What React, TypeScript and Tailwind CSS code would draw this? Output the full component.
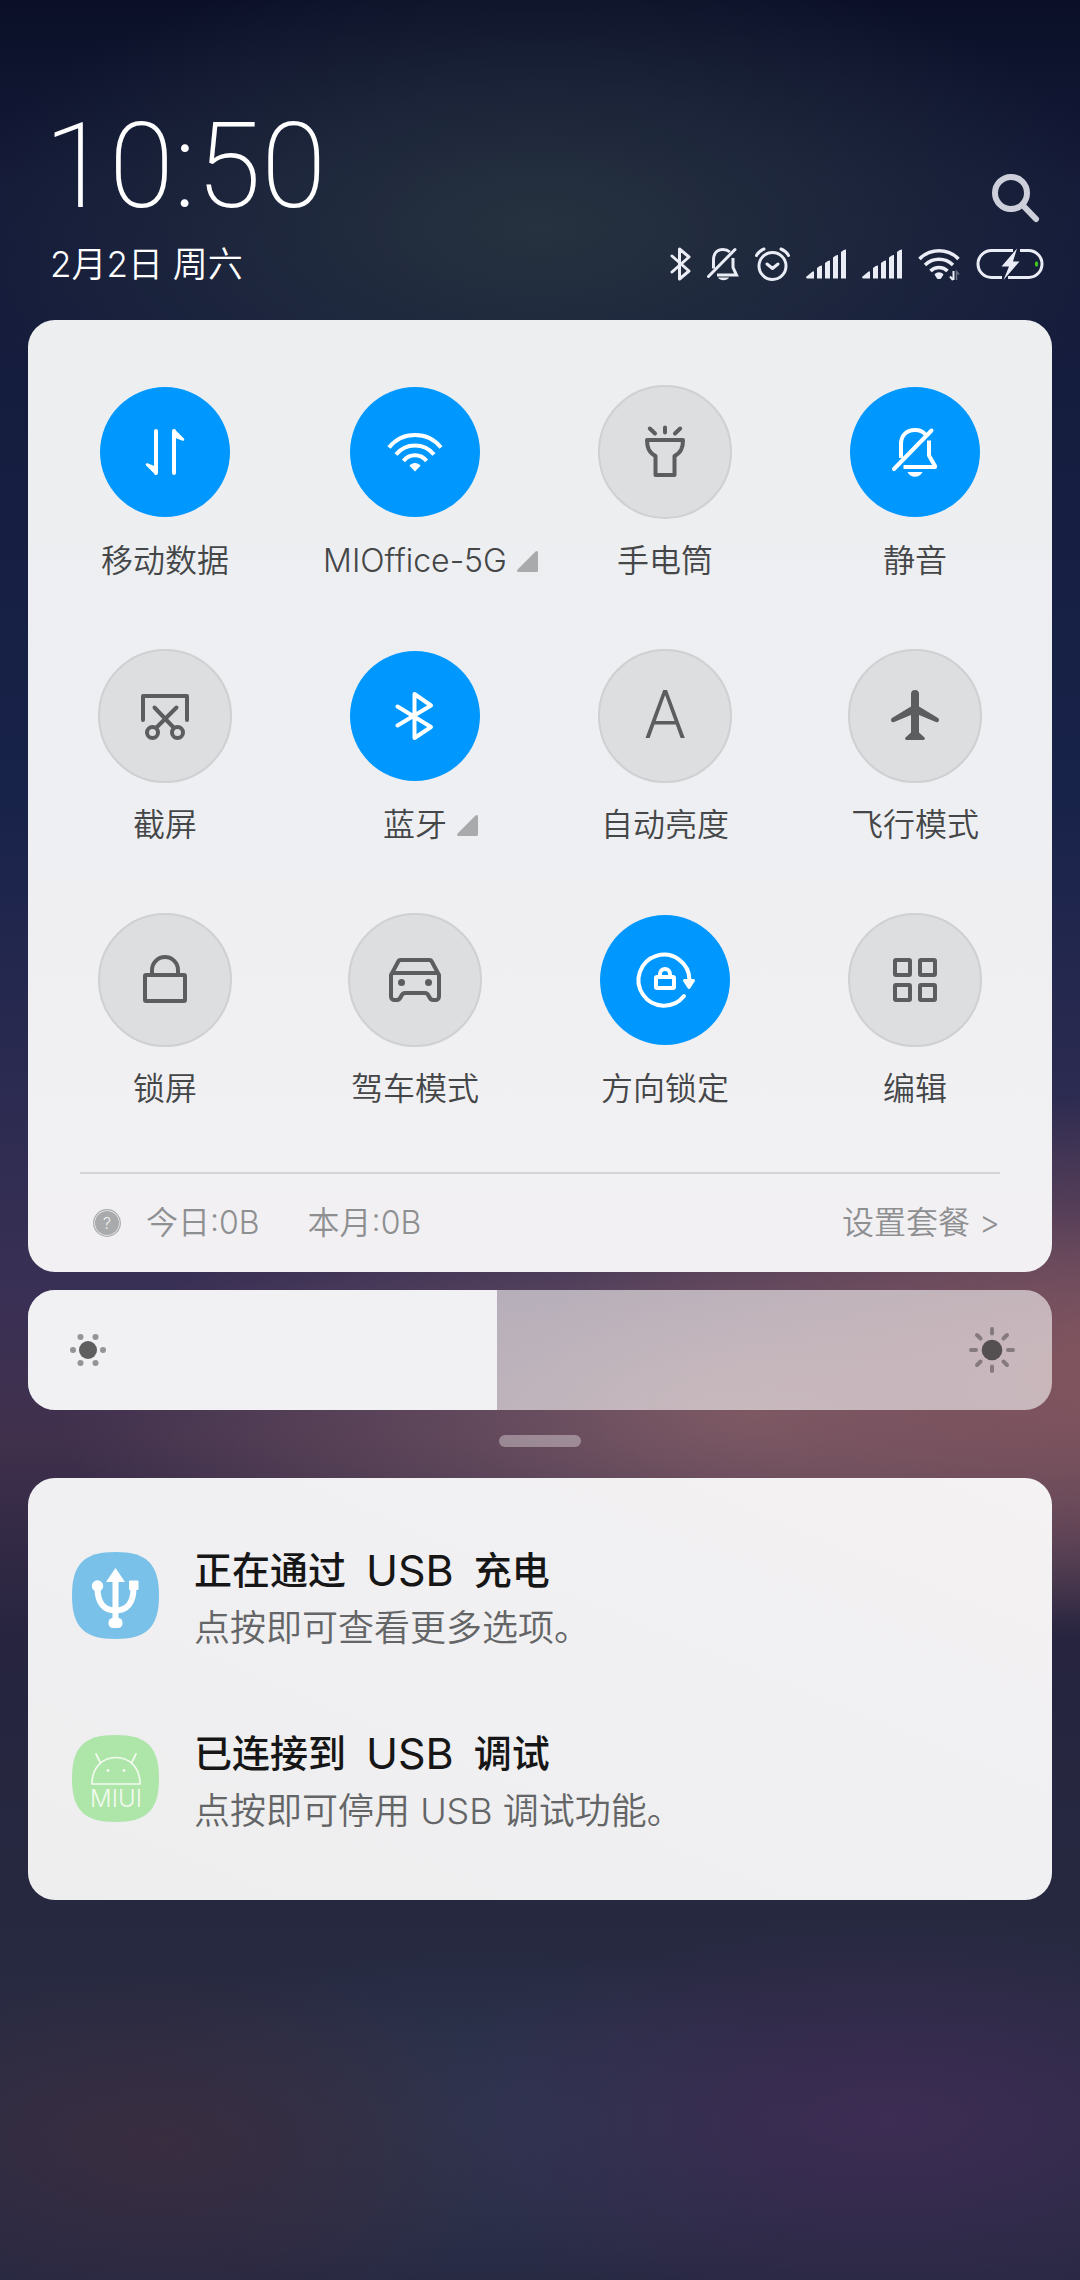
import { useState, type ReactNode } from "react";
import clsx from "clsx";

type Tile = {
  id: string;
  label: string;
  icon: ReactNode;
  expandable?: boolean;
};

const TILES: Tile[] = [
  { id: "data", label: "移动数据", icon: <DataIcon /> },
  { id: "wifi", label: "MIOffice-5G", icon: <WifiIcon />, expandable: true },
  { id: "torch", label: "手电筒", icon: <TorchIcon /> },
  { id: "mute", label: "静音", icon: <MuteIcon /> },
  { id: "screenshot", label: "截屏", icon: <ScreenshotIcon /> },
  { id: "bluetooth", label: "蓝牙", icon: <BluetoothIcon />, expandable: true },
  { id: "brightness", label: "自动亮度", icon: <span className="font-[Roboto] text-[66px] font-light leading-none">A</span> },
  { id: "airplane", label: "飞行模式", icon: <AirplaneIcon /> },
  { id: "lock", label: "锁屏", icon: <LockIcon /> },
  { id: "car", label: "驾车模式", icon: <CarIcon /> },
  { id: "rotation", label: "方向锁定", icon: <RotationIcon /> },
  { id: "edit", label: "编辑", icon: <EditIcon /> },
];

function TileSvg({ children }: { children: ReactNode }) {
  return (
    <svg
      viewBox="0 0 60 60"
      className="size-[60px] overflow-visible"
      fill="none"
      stroke="currentColor"
      strokeWidth="4"
      strokeLinecap="round"
      strokeLinejoin="round"
      aria-hidden="true"
    >
      {children}
    </svg>
  );
}

function DataIcon() {
  return (
    <TileSvg>
      <path d="M21 9V51M39 51V9" />
      <path d="M12 42.5L19.5 45.5L21 51.5ZM48 17.5L40.5 14.5L39 8.5Z" strokeWidth="2.5" fill="currentColor" />
    </TileSvg>
  );
}

function WifiIcon() {
  return (
    <TileSvg>
      <g strokeLinecap="butt">
        <path d="M4 25.5A33.3 33.3 0 0 1 56 25.5M11 32.5A24.5 24.5 0 0 1 49 32.5M18.5 39A14.5 14.5 0 0 1 41.5 39" />
      </g>
      <path d="M24.5 43.8C27 40 33 40 35.5 43.8L30 49.5Z" fill="currentColor" stroke="none" />
    </TileSvg>
  );
}

function TorchIcon() {
  return (
    <TileSvg>
      <path d="M12 18H48C48 26 46 30.5 39.5 34V53H20.5V34C14 30.5 12 26 12 18Z" />
      <path d="M30 5.5V10.5M14.8 6.5L20 11.5M45.2 6.5L40 11.5" />
    </TileSvg>
  );
}

function MuteIcon() {
  return (
    <TileSvg>
      <path d="M16 36V22C16 13 22 8 30 8C34.5 8 38 9.5 40.5 12.5" strokeLinecap="butt" />
      <path d="M44 18.5V33.5L50 44V45H18.5" strokeLinecap="butt" />
      <path d="M46.5 8.5L9 47" />
      <path d="M22.5 50H37.5C35 56.3 25 56.3 22.5 50Z" fill="currentColor" stroke="none" />
    </TileSvg>
  );
}

function ScreenshotIcon() {
  return (
    <TileSvg>
      <path d="M8 34V10H52V34" />
      <path d="M19.5 21.5L38.5 41.5M41.5 21.5L21.5 41.5" />
      <circle cx="17.5" cy="46.5" r="5.5" />
      <circle cx="42.5" cy="46.5" r="5.5" />
    </TileSvg>
  );
}

function BluetoothIcon() {
  return (
    <TileSvg>
      <path d="M12.5 20.5L46 41L29.5 52V8L46 19.5L12.5 39.5" />
    </TileSvg>
  );
}

function AirplaneIcon() {
  return (
    <TileSvg>
      <path
        d="M26 8a4 4 0 0 1 8 0V20.5L53 32a2.3 2.3 0 0 1-1.5 4.2L34 29V46.5L39.5 51.5a1.5 1.5 0 0 1-1 2.5H21.5a1.5 1.5 0 0 1-1-2.5L26 46.5V29L8.5 36.2A2.3 2.3 0 0 1 7 32L26 20.5Z"
        fill="currentColor"
        stroke="none"
      />
    </TileSvg>
  );
}

function LockIcon() {
  return (
    <TileSvg>
      <rect x="10" y="25" width="40" height="26" rx="1" />
      <path d="M17 25V20a13 13 0 0 1 26 0V25" />
    </TileSvg>
  );
}

function CarIcon() {
  return (
    <TileSvg>
      <path d="M6 25V46.5a3.5 3.5 0 0 0 3.5 3.5h2.5c2 0 3-1.5 4-3.5s1.5-3.5 4-3.5h20c2.5 0 3 1.5 4 3.5s2 3.5 4 3.5h2.5a3.5 3.5 0 0 0 3.5-3.5V25L47 12a3 3 0 0 0-3-2H16a3 3 0 0 0-3 2ZM8 23H52" />
      <circle cx="16.5" cy="32.5" r="3.5" fill="currentColor" stroke="none" />
      <circle cx="43.5" cy="32.5" r="3.5" fill="currentColor" stroke="none" />
    </TileSvg>
  );
}

function RotationIcon() {
  return (
    <TileSvg>
      <path d="M49 46A25.5 25.5 0 1 1 54.5 30" />
      <path d="M49.5 30.5H58.5L54 37.5Z" fill="currentColor" strokeWidth="3" />
      <rect x="21" y="27" width="18" height="11" rx="1" />
      <path d="M25 27V24a5 5 0 0 1 10 0V27" />
    </TileSvg>
  );
}

function EditIcon() {
  return (
    <TileSvg>
      <rect x="10" y="10" width="15" height="15" rx="1" />
      <rect x="35" y="10" width="15" height="15" rx="1" />
      <rect x="10" y="35" width="15" height="15" rx="1" />
      <rect x="35" y="35" width="15" height="15" rx="1" />
    </TileSvg>
  );
}

function SignalIcon() {
  return (
    <svg viewBox="0 0 40 30" className="h-[30px] w-10" fill="currentColor" aria-label="信号">
      <path d="M.5 27.5L6 23q2-1.5 2 .5v6H1q-1.5-.5-.5-2z" />
      <path d="M11 19q3-3 5-2.500v13h-5zM19 14q3-3 5-2.500v18h-5zM27 8.500q3-3 5-2.500v23.500h-5zM35 3q3-3 5-2.500v29h-5z" />
    </svg>
  );
}

function StatusIcons() {
  return (
    <div className="flex h-12 items-center gap-4 text-[#eaedf6]">
      <svg viewBox="0 0 21 34" className="h-[34px] w-[21px]" fill="none" stroke="currentColor" strokeWidth="3" strokeLinejoin="round" strokeLinecap="round" aria-label="蓝牙">
        <path d="M2 9L19 24L9.5 32V2L19 10L2 25" />
      </svg>
      <svg viewBox="0 0 32 34" className="h-[34px] w-8" fill="none" stroke="currentColor" strokeWidth="3" aria-label="静音">
        <path d="M6.5 21.5V13C6.5 6 10.5 2.5 16 2.5C19 2.5 21 3.3 22.8 5M26 11V20.5L29.5 28H10" />
        <path d="M28 2.5L1.5 29.5" strokeLinecap="round" />
        <path d="M11 30.5H22C20 34 13 34 11 30.5Z" fill="currentColor" stroke="none" />
      </svg>
      <svg viewBox="0 0 35 34" className="h-[34px] w-[35px]" fill="none" stroke="currentColor" strokeWidth="3" strokeLinecap="round" strokeLinejoin="round" aria-label="闹钟">
        <circle cx="17.5" cy="19" r="13.5" />
        <path d="M12 17l5.5 4.5 5.5-4.5M1.5 8.5Q4 4 9 2M33.5 8.5Q31 4 26 2" />
      </svg>
      <SignalIcon />
      <SignalIcon />
      <svg viewBox="0 0 42 34" className="h-[34px] w-[42px]" fill="none" stroke="currentColor" strokeWidth="3.5" aria-label="WLAN">
        <path d="M1.5 12A27 27 0 0 1 40.5 12M7 18A20 20 0 0 1 35 18M12.5 24A12 12 0 0 1 29.5 24" />
        <path d="M16.5 27.5C19 24.5 23 24.5 25.5 27.5L23 31.5Q21 32.5 19 31.5Z" fill="currentColor" stroke="none" />
        <path d="M35.5 24V33M32 29.5L35 33" strokeWidth="2" />
        <path d="M38.5 33V24.5L41 27.5" strokeWidth="1.5" opacity=".4" />
      </svg>
      <svg viewBox="0 0 68 34" className="h-[34px] w-[68px]" fill="none" stroke="currentColor" strokeWidth="3" aria-label="正在充电">
        <path d="M37 3.5H15.5A13.5 13.5 0 0 0 15.5 30.5H26M44 3.5H52.5A13.5 13.5 0 0 1 52.5 30.5H32" />
        <path d="M41 1.5L25.5 19.5H33L27.5 33L43.5 14.5H37Z" fill="currentColor" stroke="none" />
        <ellipse cx="60.5" cy="17" rx="1.7" ry="2.7" fill="#43c51c" stroke="none" />
      </svg>
    </div>
  );
}

function Header() {
  return (
    <header className="flex justify-between pt-[106px] pr-9 pb-8 pl-[50px] text-white">
      <div>
        <time className="-ml-1.5 block font-[Roboto] text-[118px] leading-[122px] font-extralight">10:50</time>
        <p className="mt-3 text-[35px] leading-[48px] font-[350]">2月2日 周六</p>
      </div>
      <div className="flex flex-col items-end justify-end gap-4">
        <button type="button" aria-label="搜索" className="mr-1 text-[#cdd0da]">
          <svg viewBox="0 0 50 50" className="size-[50px]" fill="none" stroke="currentColor">
            <circle cx="21" cy="19" r="16" strokeWidth="6" />
            <path d="M33 31.5L46 45" strokeWidth="6" strokeLinecap="round" />
          </svg>
        </button>
        <StatusIcons />
      </div>
    </header>
  );
}

function QuickTile({ tile, active, onToggle }: { tile: Tile; active: boolean; onToggle: () => void }) {
  return (
    <button type="button" aria-pressed={active} onClick={onToggle} className="flex flex-col items-center">
      <span className="grid size-[134px] place-items-center">
        <span
          className={clsx(
            "grid place-items-center rounded-full",
            active ? "size-[130px] bg-[#0098ff] text-white" : "size-[134px] border-2 border-[#cfd0d2] bg-[#dddee0] text-[#5c5d5e]"
          )}
        >
          {tile.icon}
        </span>
      </span>
      <span className="relative mt-[18px] text-[32px] leading-[48px] font-[350] whitespace-nowrap text-[#444648]">
        {tile.label}
        {tile.expandable && (
          <svg viewBox="0 0 21 21" className="absolute top-3.5 left-full ml-2.5 size-[21px] text-[#a9aaac]" fill="currentColor" aria-hidden="true">
            <path d="M18.5.6Q21-.8 21 1.5V19.5Q21 21 19.5 21H1.5Q-.8 21 .6 18.5Z" />
          </svg>
        )}
      </span>
    </button>
  );
}

function ControlPanel() {
  const [active, setActive] = useState(["data", "wifi", "mute", "bluetooth", "rotation"]);

  const toggle = (id: string) => {
    setActive((prev) => (prev.includes(id) ? prev.filter((x) => x !== id) : [...prev, id]));
  };

  return (
    <section className="rounded-[27px] bg-linear-to-b from-[#eceef0] via-[#eeeff2] to-[#f2f0f3] px-3 pt-[65px]">
      <div className="grid grid-cols-4 gap-y-16">
        {TILES.map((tile) => (
          <QuickTile key={tile.id} tile={tile} active={active.includes(tile.id)} onToggle={() => toggle(tile.id)} />
        ))}
      </div>
      <div className="mx-10 mt-[59px] flex items-center border-t-2 border-[#d3d4d6] py-[25px] pl-[13px] text-[32px] leading-[48px] font-[350] text-[#8e8f91]">
        <svg viewBox="0 0 28 28" className="size-7" aria-hidden="true">
          <circle cx="14" cy="14" r="13.3" fill="none" stroke="#a9aaac" strokeWidth="1.2" />
          <circle cx="14" cy="14" r="12" fill="#a9aaac" />
          <text x="14" y="20" textAnchor="middle" fontSize="16" fill="#eeeff1">?</text>
        </svg>
        <span className="ml-[25px]">今日:0B</span>
        <span className="ml-12">本月:0B</span>
        <a href="#plan" className="ml-auto">设置套餐 &gt;</a>
      </div>
    </section>
  );
}

function BrightnessSlider() {
  const [level, setLevel] = useState(458);

  return (
    <div className="relative mt-[18px] h-[120px] overflow-hidden rounded-[27px] bg-white/58">
      <input
        type="range"
        aria-label="亮度"
        min={0}
        max={1000}
        value={level}
        onChange={(e) => setLevel(Number(e.target.value))}
        className="block h-full w-full appearance-none [&::-webkit-slider-thumb]:h-0 [&::-webkit-slider-thumb]:w-0 [&::-webkit-slider-thumb]:appearance-none"
        style={{ background: `linear-gradient(to right, #f1f0f2 ${level / 10}%, transparent ${level / 10}%)` }}
      />
      <span className="pointer-events-none absolute inset-0 flex items-center justify-between px-9">
        <svg viewBox="-24 -24 48 48" className="size-12" fill="#949495" aria-hidden="true">
          <circle r="9" fill="#5f5f60" />
          <circle cx="-15" r="3" />
          <circle cx="15" r="3" />
          <circle cx="-7.5" cy="-13" r="3" />
          <circle cx="7.5" cy="-13" r="3" />
          <circle cx="-7.5" cy="13" r="3" />
          <circle cx="7.5" cy="13" r="3" />
        </svg>
        <svg viewBox="-24 -24 48 48" className="size-12" stroke="#857a80" strokeWidth="4" strokeLinecap="round" aria-hidden="true">
          <circle r="10.3" fill="#544f51" stroke="none" />
          <path d="M0-21V-16.5M0 21V16.5M-21 0H-16M21 0H16M-15-15L-11.5-11.5M15-15L11.5-11.5M-15 15L-11.5 11.5M15 15L11.5 11.5" />
        </svg>
      </span>
    </div>
  );
}

function UsbIcon() {
  return (
    <svg viewBox="0 0 87 87" className="mt-2.5 size-[87px]" aria-hidden="true">
      <path d="M43.5 0C75 0 87 12 87 43.5S75 87 43.5 87S0 75 0 43.5S12 0 43.5 0Z" fill="#79c1e8" />
      <g fill="white">
        <path d="M43.5 16L53 30H34Z" />
        <circle cx="25.5" cy="34" r="5.7" />
        <rect x="57" y="28.5" width="9.5" height="9.5" rx="1" />
        <rect x="36.5" y="66" width="14" height="10" rx="4.5" />
      </g>
      <path d="M43.5 28V70M25.5 36C25.5 51 32 58.5 43.5 58.5S61.5 51 61.5 36" fill="none" stroke="white" strokeWidth="6" />
    </svg>
  );
}

function MiuiIcon() {
  return (
    <svg viewBox="0 0 87 87" className="mt-2.5 size-[87px]" aria-hidden="true">
      <path d="M43.5 0C75 0 87 12 87 43.5S75 87 43.5 87S0 75 0 43.5S12 0 43.5 0Z" fill="#aee5a8" />
      <g fill="none" stroke="#f2fbef" strokeWidth="1.7" strokeLinejoin="round" strokeLinecap="round">
        <path d="M20 49C20 33 30 22.5 44 22.5S68 33 68 49ZM24 19L28.5 28M64 19L59.5 28" />
      </g>
      <circle cx="36" cy="35.5" r="1.5" fill="#f2fbef" />
      <circle cx="52" cy="35.5" r="1.5" fill="#f2fbef" />
      <text x="44" y="72" textAnchor="middle" fontSize="24" fontWeight="300" fill="#f2fbef">MIUI</text>
    </svg>
  );
}

const NOTIFICATIONS = [
  { icon: <UsbIcon />, before: "正在通过", after: "充电", text: "点按即可查看更多选项。" },
  { icon: <MiuiIcon />, before: "已连接到", after: "调试", text: "点按即可停用 USB 调试功能。" },
];

function Notifications() {
  return (
    <ul className="flex flex-col gap-[67px] rounded-[27px] bg-linear-to-bl from-[#f4f2f3] via-[#f0eff1] to-[#eeeeef] px-11 pt-16 pb-[59px]">
      {NOTIFICATIONS.map((item) => (
        <li key={item.before} className="flex items-start gap-[35px]">
          {item.icon}
          <div>
            <h2 className="flex items-center gap-5 text-[38px] leading-[56px] font-medium text-[#161617]">
              <span>{item.before}</span>
              <span className="text-[43px] font-normal">USB</span>
              <span>{item.after}</span>
            </h2>
            <p className="text-4xl leading-[60px] font-[350] text-[#646566]">{item.text}</p>
          </div>
        </li>
      ))}
    </ul>
  );
}

export default function App() {
  return (
    <div className="min-h-screen bg-[#262840] bg-[radial-gradient(ellipse_55%_12%_at_105%_60%,#84565f_0%,transparent_100%),radial-gradient(ellipse_65%_10%_at_70%_62%,#7a5a66_0%,transparent_100%),radial-gradient(ellipse_45%_9%_at_82%_93%,#3d2c54_0%,transparent_100%),radial-gradient(ellipse_35%_8%_at_15%_94%,#392d40_0%,transparent_100%),radial-gradient(ellipse_35%_8%_at_45%_93%,#2c3650_0%,transparent_100%),radial-gradient(ellipse_55%_12%_at_50%_10%,#26323f_0%,transparent_100%),linear-gradient(to_bottom,#0b1028_0%,#141a38_8%,#18234a_35%,#3a3055_57%,#40304c_63%,#26243f_72%,#262940_86%,#2b2d45_93%,#272842_100%)] px-7 font-[Inter,'Noto_Sans_CJK_SC',sans-serif]">
      <div className="-mx-7">
        <Header />
      </div>
      <main>
        <ControlPanel />
        <BrightnessSlider />
        <div className="mx-auto mt-[25px] mb-[31px] h-3 w-[82px] rounded-full bg-white/35" />
        <Notifications />
      </main>
    </div>
  );
}
